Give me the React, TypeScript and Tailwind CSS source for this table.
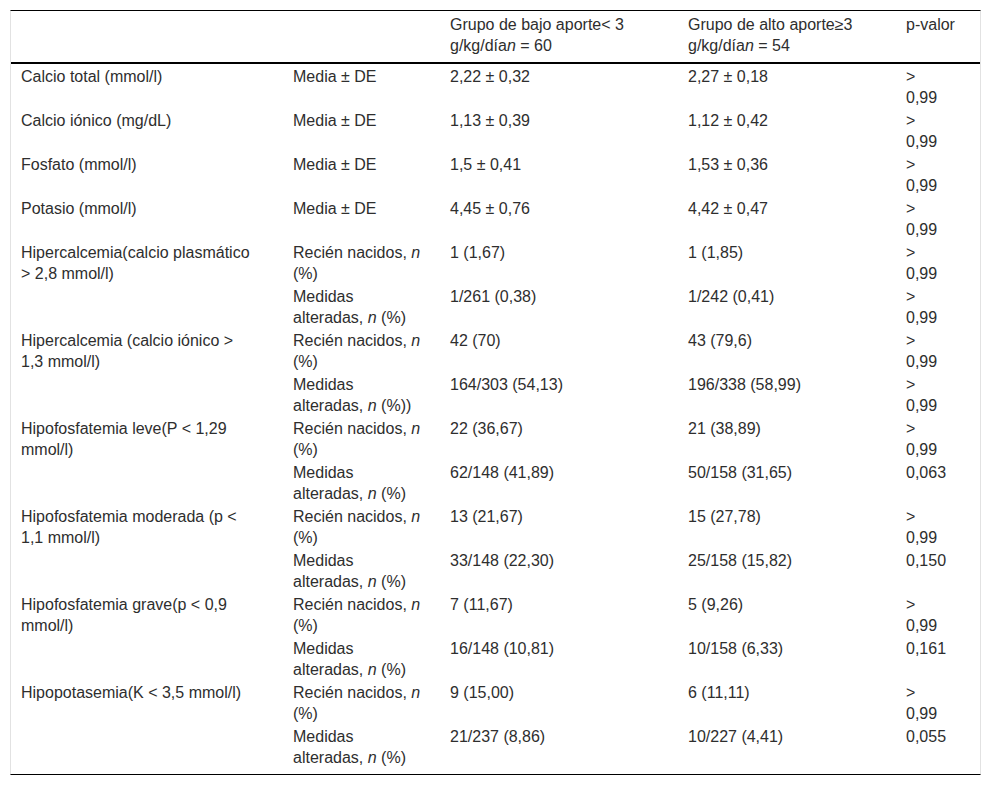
import React from "react";

type Row = {
  label?: React.ReactNode;
  span?: boolean;
  desc: React.ReactNode;
  a: string;
  b: string;
  p: React.ReactNode;
};

const N = () => <i>n</i>;

const gt = (
  <>
    &gt;
    <br />
    0,99
  </>
);

const rn = (
  <>
    Recién nacidos, <N />
    <br />
    (%)
  </>
);
const ma = (
  <>
    Medidas
    <br />
    alteradas, <N /> (%)
  </>
);

const rows: Row[] = [
  { label: "Calcio total (mmol/l)", desc: "Media ± DE", a: "2,22 ± 0,32", b: "2,27 ± 0,18", p: gt },
  { label: "Calcio iónico (mg/dL)", desc: "Media ± DE", a: "1,13 ± 0,39", b: "1,12 ± 0,42", p: gt },
  { label: "Fosfato (mmol/l)", desc: "Media ± DE", a: "1,5 ± 0,41", b: "1,53 ± 0,36", p: gt },
  { label: "Potasio (mmol/l)", desc: "Media ± DE", a: "4,45 ± 0,76", b: "4,42 ± 0,47", p: gt },
  {
    label: (
      <>
        Hipercalcemia(calcio plasmático
        <br />
        &gt; 2,8 mmol/l)
      </>
    ),
    span: true,
    desc: rn,
    a: "1 (1,67)",
    b: "1 (1,85)",
    p: gt,
  },
  { desc: ma, a: "1/261 (0,38)", b: "1/242 (0,41)", p: gt },
  {
    label: (
      <>
        Hipercalcemia (calcio iónico &gt;
        <br />
        1,3 mmol/l)
      </>
    ),
    span: true,
    desc: rn,
    a: "42 (70)",
    b: "43 (79,6)",
    p: gt,
  },
  {
    desc: (
      <>
        Medidas
        <br />
        alteradas, <N /> (%))
      </>
    ),
    a: "164/303 (54,13)",
    b: "196/338 (58,99)",
    p: gt,
  },
  {
    label: (
      <>
        Hipofosfatemia leve(P &lt; 1,29
        <br />
        mmol/l)
      </>
    ),
    span: true,
    desc: rn,
    a: "22 (36,67)",
    b: "21 (38,89)",
    p: gt,
  },
  { desc: ma, a: "62/148 (41,89)", b: "50/158 (31,65)", p: "0,063" },
  {
    label: (
      <>
        Hipofosfatemia moderada (p &lt;
        <br />
        1,1 mmol/l)
      </>
    ),
    span: true,
    desc: rn,
    a: "13 (21,67)",
    b: "15 (27,78)",
    p: gt,
  },
  { desc: ma, a: "33/148 (22,30)", b: "25/158 (15,82)", p: "0,150" },
  {
    label: (
      <>
        Hipofosfatemia grave(p &lt; 0,9
        <br />
        mmol/l)
      </>
    ),
    span: true,
    desc: rn,
    a: "7 (11,67)",
    b: "5 (9,26)",
    p: gt,
  },
  { desc: ma, a: "16/148 (10,81)", b: "10/158 (6,33)", p: "0,161" },
  {
    label: "Hipopotasemia(K < 3,5 mmol/l)",
    span: true,
    desc: rn,
    a: "9 (15,00)",
    b: "6 (11,11)",
    p: gt,
  },
  { desc: ma, a: "21/237 (8,86)", b: "10/227 (4,41)", p: "0,055" },
];

const td = "align-top pl-[10px] pr-[4px] pt-[2px] pb-0 leading-[21px] whitespace-nowrap";
const th =
  "align-top text-left font-normal pl-[10px] pr-[4px] pt-[3px] pb-[6px] leading-[21px] whitespace-nowrap border-b-2 border-black";

export default function App() {
  return (
    <div
      className="min-h-[787px] w-[992px] bg-white pt-[10px] text-[16px] text-[#2e2e2e]"
      style={{ fontFamily: '"Liberation Sans", Arial, sans-serif' }}
    >
      <div className="ml-[10px] w-[971px] border-t border-b border-t-black border-b-black border-l border-r border-l-[#e2e2e2] border-r-[#e2e2e2] pb-[6px]">
        <table className="w-full table-fixed border-collapse">
          <colgroup>
            <col className="w-[272px]" />
            <col className="w-[157px]" />
            <col className="w-[238px]" />
            <col className="w-[218px]" />
            <col />
          </colgroup>
          <thead>
            <tr>
              <th className={th}></th>
              <th className={th}></th>
              <th className={th}>
                Grupo de bajo aporte&lt; 3
                <br />
                g/kg/día<i>n</i> = 60
              </th>
              <th className={th}>
                Grupo de alto aporte≥3
                <br />
                g/kg/día<i>n</i> = 54
              </th>
              <th className={th}>p-valor</th>
            </tr>
          </thead>
          <tbody>
            {rows.map((r, i) => (
              <tr key={i}>
                {r.label !== undefined && (
                  <td className={td} rowSpan={r.span ? 2 : 1}>
                    {r.label}
                  </td>
                )}
                <td className={td}>{r.desc}</td>
                <td className={td}>{r.a}</td>
                <td className={td}>{r.b}</td>
                <td className={td}>{r.p}</td>
              </tr>
            ))}
          </tbody>
        </table>
      </div>
    </div>
  );
}
